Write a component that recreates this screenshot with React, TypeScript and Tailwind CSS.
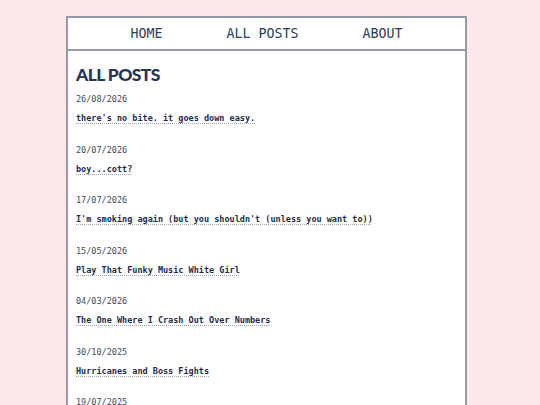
import React from 'react';

const posts = [
  { date: '26/08/2026', title: "there's no bite. it goes down easy." },
  { date: '20/07/2026', title: 'boy...cott?' },
  { date: '17/07/2026', title: "I'm smoking again (but you shouldn't (unless you want to))" },
  { date: '15/05/2026', title: 'Play That Funky Music White Girl' },
  { date: '04/03/2026', title: 'The One Where I Crash Out Over Numbers' },
  { date: '30/10/2025', title: 'Hurricanes and Boss Fights' },
  { date: '19/07/2025', title: '' },
];

const mono = "font-['DejaVu_Sans_Mono','Liberation_Mono',monospace]";

export default function App() {
  return (
    <div className="min-h-screen bg-[#fde8e9] pt-4">
      <div className="ml-[66px] w-[401px] min-h-[420px] border-2 border-[#959aa8] bg-white">
        <nav className={`h-[33px] border-b-2 border-[#959aa8] flex items-center justify-center gap-[64px] text-[13.3px] text-[#2c3d5a] ${mono}`}>
          <a href="#">HOME</a>
          <a href="#">ALL POSTS</a>
          <a href="#">ABOUT</a>
        </nav>
        <main className="px-2 pt-[13px]">
          <h1 className="font-['Lato','Open_Sans',sans-serif] font-black text-[17.5px] leading-[22px] tracking-[-0.6px] text-[#243556]">
            ALL POSTS
          </h1>
          <ul className="mt-[7px]">
            {posts.map(p => (
              <li key={p.date} className={`${mono} text-[8.5px] leading-[12px] mb-[19.5px]`}>
                <p className="text-[#404b5c]">{p.date}</p>
                {p.title && (
                  <a
                    href="#"
                    className="block mt-[7px] font-bold text-[#1f2c4b] underline decoration-dotted decoration-[#9aa2b3] underline-offset-2"
                  >
                    {p.title}
                  </a>
                )}
              </li>
            ))}
          </ul>
        </main>
      </div>
    </div>
  );
}
